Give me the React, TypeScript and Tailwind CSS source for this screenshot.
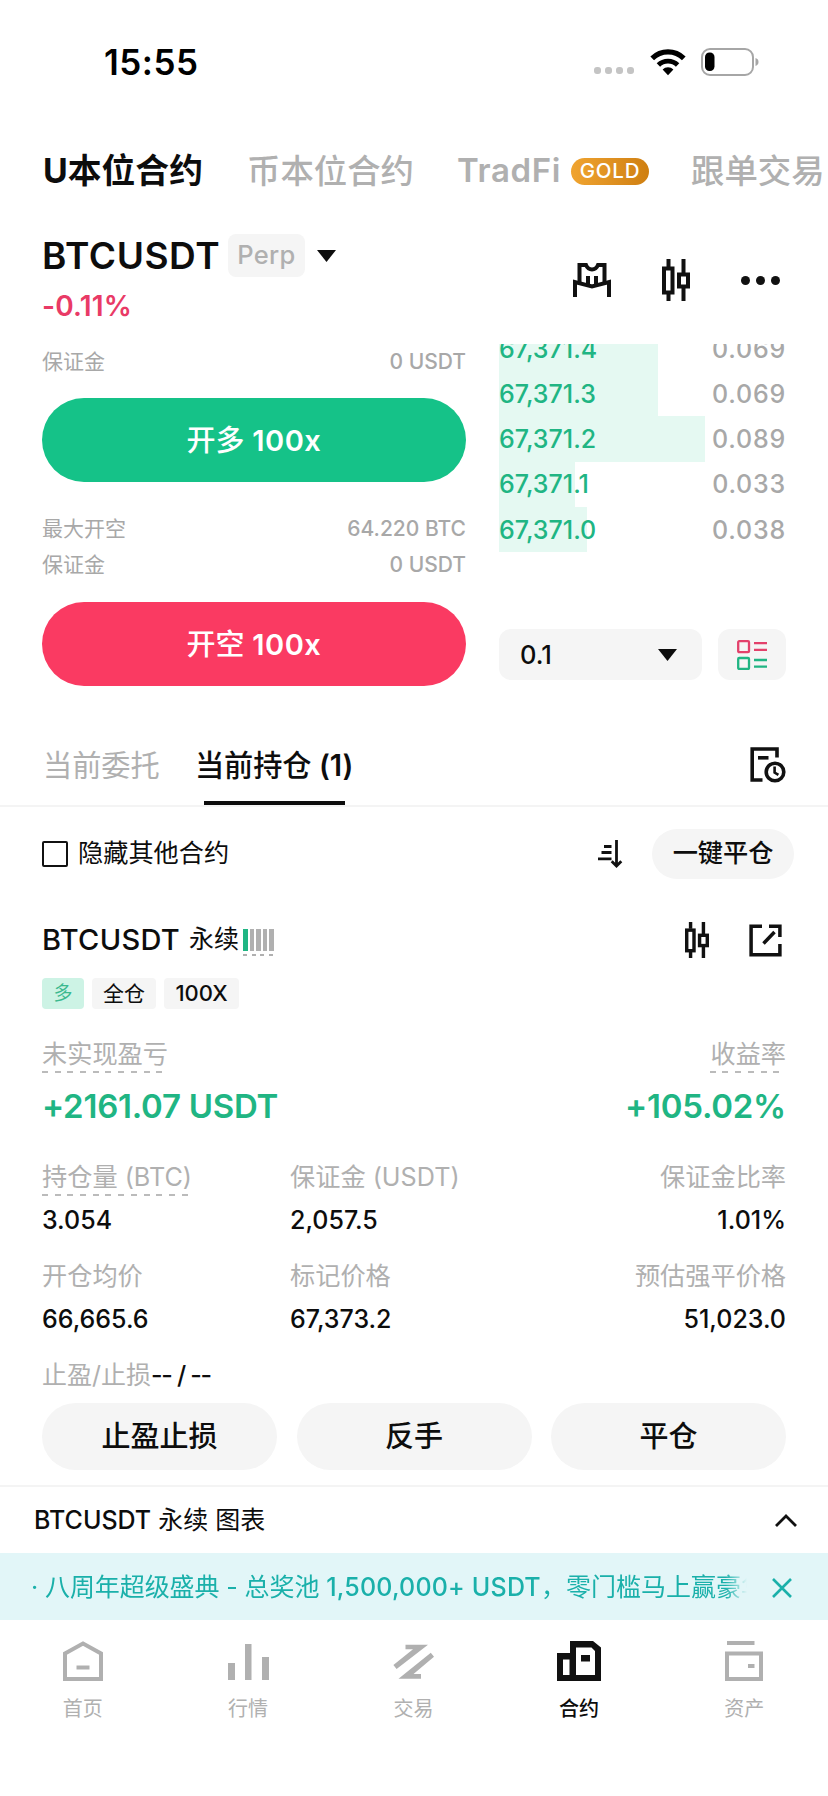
import type { ReactNode } from "react";

const tabs = ["U本位合约", "币本位合约", "TradFi", "跟单交易"];

const bids = [
  { price: "67,371.4", amount: "0.069", depth: 159 },
  { price: "67,371.3", amount: "0.069", depth: 159 },
  { price: "67,371.2", amount: "0.089", depth: 206 },
  { price: "67,371.1", amount: "0.033", depth: 76 },
  { price: "67,371.0", amount: "0.038", depth: 88 },
];

function WifiIcon() {
  return (
    <svg width="36" height="28" viewBox="0 0 36 28" fill="none">
      <path d="M2.200 10.400a22.500 22.500 0 0 1 31.600 0" stroke="#000" strokeWidth="5.200" />
      <path d="M8.400 17a13.600 13.600 0 0 1 19.200 0" stroke="#000" strokeWidth="4.800" />
      <path d="M18 27.200l-5.400-5.600a7.600 7.600 0 0 1 10.800 0z" fill="#000" />
    </svg>
  );
}

function BatteryIcon() {
  return (
    <svg width="58" height="28" viewBox="0 0 58 28" fill="none">
      <rect x="1" y="1" width="51" height="26" rx="8" stroke="#a6a6a6" strokeWidth="2" />
      <rect x="4" y="4.500" width="9.500" height="18.500" rx="4.500" fill="#000" />
      <path d="M54.500 10c2.300.8 3 2.200 3 4s-.7 3.200-3 4z" fill="#a6a6a6" />
    </svg>
  );
}

function ShirtIcon() {
  return (
    <svg width="38" height="34" viewBox="0 0 38 34" fill="none" stroke="#111" strokeWidth="4">
      <path d="M2 34V19l17 4.500L36 19v15" />
      <path d="M6.500 20V2H13c1.500 3.500 3.500 4.500 6 4.500S23.500 5.500 25 2h6.500v18" />
      <path d="M15 13v9M23 13v9" />
    </svg>
  );
}

function CandlesIcon({ width, height }: { width: number; height: number }) {
  return (
    <svg width={width} height={height} viewBox="0 0 28 42" fill="none" stroke="#111" strokeWidth="4">
      <path d="M6.500 0v8M6.500 35v7M21.500 0v14M21.500 29v13" />
      <rect x="2" y="9.500" width="8.500" height="24" />
      <rect x="17" y="15.500" width="9" height="12" />
    </svg>
  );
}

function DepthIcon() {
  return (
    <svg width="30" height="30" viewBox="0 0 30 30" fill="none" strokeWidth="2.300">
      <rect x="1.200" y="1.200" width="10.800" height="11" rx="1" stroke="#e3416b" />
      <path d="M17 3.200h13M17 9.800h13" stroke="#e3416b" />
      <rect x="1.200" y="18" width="10.800" height="11" rx="1" stroke="#20b583" />
      <path d="M17 20h13M17 26.600h13" stroke="#20b583" />
    </svg>
  );
}

function HistoryIcon() {
  return (
    <svg width="36" height="36" viewBox="0 0 36 36" fill="none" stroke="#111" strokeWidth="3.600">
      <path d="M27 10.500V2H2.200v31H12.500" />
      <path d="M8 10.800h10.500" />
      <circle cx="25" cy="25" r="8.800" />
      <path d="M24.600 19.500v6l3.800 2.300" strokeWidth="2.600" />
    </svg>
  );
}

function SortIcon() {
  return (
    <svg width="25" height="28" viewBox="0 0 25 28" fill="none" stroke="#111" strokeWidth="2.800">
      <path d="M6 6.500h7.500M3.500 12.500h10M0 18.800h13.500" />
      <path d="M18.500 0v25.500M13.700 21.200l4.800 4.800 4.800-4.800" />
    </svg>
  );
}

function ShareIcon() {
  return (
    <svg width="33" height="33" viewBox="0 0 33 33" fill="none" stroke="#111" strokeWidth="3.500">
      <path d="M13 2.200H2.100v28.500h28.800V20" />
      <path d="M20 2.200h10.900V13M14.500 19.500L25.500 8" />
    </svg>
  );
}

function HomeIcon() {
  return (
    <svg width="40" height="40" viewBox="0 0 40 40" fill="none" stroke="#b0b0b0" strokeWidth="4">
      <path d="M2 12.500L20 2.500l18 10V38H2z" />
      <path d="M13.500 26.500h13" />
    </svg>
  );
}

function MarketIcon() {
  return (
    <svg width="41" height="40" viewBox="0 0 41 40" fill="#b0b0b0">
      <path d="M0 22h7v17H0zM17 3h6.500v36H17zM34 16h7v23h-7z" />
    </svg>
  );
}

function TradeIcon() {
  return (
    <svg width="41" height="40" viewBox="0 0 41 40" fill="#b0b0b0">
      <path d="M12.500 3.700H35L3.600 28 .4 24 20 8.300h-7.500z" />
      <path d="M28 37.700H5.500l32.300-26 3.200 4-20.500 17.400H28z" />
    </svg>
  );
}

function ContractIcon() {
  return (
    <svg width="44" height="40" viewBox="0 0 44 40">
      <path
        d="M0 12h13V0h23l8 6.500V40H0zM6 18.500V34h6.500V18.500zM19 6.500V34h19V10l-3.500-3.500z"
        fill="#111"
        fillRule="evenodd"
      />
      <path d="M24 14h9v6.500h-9z" fill="#111" />
    </svg>
  );
}

function AssetsIcon() {
  return (
    <svg width="38" height="40" viewBox="0 0 38 40" fill="none" stroke="#b0b0b0" strokeWidth="4">
      <path d="M2 2h27.500" />
      <path d="M2 12.500h34V38H2z" />
      <path d="M23 25h6.500" />
    </svg>
  );
}

const navItems = [
  { label: "首页", icon: <HomeIcon /> },
  { label: "行情", icon: <MarketIcon /> },
  { label: "交易", icon: <TradeIcon /> },
  { label: "合约", icon: <ContractIcon />, active: true },
  { label: "资产", icon: <AssetsIcon /> },
];

function Triangle() {
  return (
    <svg width="19" height="12" viewBox="0 0 19 12">
      <path d="M0 0h19L9.500 12z" fill="#0d0d0d" />
    </svg>
  );
}

function StatusBar() {
  return (
    <div className="flex h-[124px] justify-between pt-[44px] pr-[69px] pl-[104px]">
      <span className="text-[35px] leading-[37px] font-semibold tracking-[0.500px] text-black">15:55</span>
      <div className="flex h-[36px] items-center">
        <div className="mt-[17px] flex gap-[4px]">
          {[0, 1, 2, 3].map((i) => (
            <span key={i} className="size-[7px] rounded-[3px] bg-[#c4c4c4]" />
          ))}
        </div>
        <div className="ml-[16px]">
          <WifiIcon />
        </div>
        <div className="ml-[15px]">
          <BatteryIcon />
        </div>
      </div>
    </div>
  );
}

function TopTabs() {
  return (
    <div className="flex h-[94px] items-center overflow-hidden pl-[43px] text-[33.400px] font-medium whitespace-nowrap text-[#b0b0b0]">
      <span className="w-[204px] text-[33.800px] font-bold text-[#0d0d0d]">{tabs[0]}</span>
      <span className="w-[210px]">{tabs[1]}</span>
      <span className="w-[114px] text-[33px] font-semibold tracking-[0.600px]">{tabs[2]}</span>
      <span className="flex h-[27px] w-[78px] items-center justify-center rounded-full bg-linear-to-r from-[#f0a430] to-[#cf7f10] text-[20.500px] tracking-[0.800px] text-white">
        GOLD
      </span>
      <span className="ml-[42px]">{tabs[3]}</span>
    </div>
  );
}

function PairHeader() {
  return (
    <div className="flex h-[126px] justify-between pr-[48px] pl-[42px]">
      <div>
        <div className="flex items-center pt-[16px]">
          <span className="w-[186px] text-[37px] leading-[43px] font-semibold tracking-[0.600px]">BTCUSDT</span>
          <span className="flex h-[43px] w-[77px] items-center justify-center rounded-[8px] bg-[#f5f5f5] text-[25.500px] font-medium tracking-[0.300px] text-[#b0b0b0]">
            Perp
          </span>
          <span className="ml-[12px]">
            <Triangle />
          </span>
        </div>
        <div className="mt-[12px] text-[28px] leading-[34px] font-semibold tracking-[0.200px] text-[#e93a66]">
          -0.11%
        </div>
      </div>
      <div className="flex h-[124px] items-center">
        <ShirtIcon />
        <div className="ml-[51px]">
          <CandlesIcon width={28} height={42} />
        </div>
        <div className="ml-[51px] flex gap-[6px]">
          {[0, 1, 2].map((i) => (
            <span key={i} className="size-[9px] rounded-full bg-[#111]" />
          ))}
        </div>
      </div>
    </div>
  );
}

function InfoRow({ label, value }: { label: string; value: string }) {
  return (
    <div className="flex h-[36px] items-center justify-between text-[21px] text-[#a8a8a8]">
      <span>{label}</span>
      <span className="font-medium">{value}</span>
    </div>
  );
}

function TradePanel() {
  return (
    <div className="flex h-[376px] justify-between pr-[42px] pl-[42px]">
      <div className="w-[424px]">
        <InfoRow label="保证金" value="0 USDT" />
        <button className="mt-[18px] block h-[84px] w-full rounded-full bg-[#15c288] pt-[1px] text-[29px] font-medium text-white">
          开多 <span className="font-semibold tracking-[0.500px]">100x</span>
        </button>
        <div className="mt-[29px]">
          <InfoRow label="最大开空" value="64.220 BTC" />
          <InfoRow label="保证金" value="0 USDT" />
        </div>
        <button className="mt-[19px] block h-[84px] w-full rounded-full bg-[#fa3a62] pt-[1px] text-[29px] font-medium text-white">
          开空 <span className="font-semibold tracking-[0.500px]">100x</span>
        </button>
      </div>
      <div className="w-[287px]">
        <div className="flex h-[208px] flex-col justify-end overflow-hidden">
          {bids.map((bid) => (
            <div
              key={bid.price}
              className="flex h-[45.200px] shrink-0 items-center justify-between bg-[linear-gradient(#e5f9f2,#e5f9f2)] bg-no-repeat pt-[2px] text-[25px] font-medium"
              style={{ backgroundSize: `${bid.depth}px 100%` }}
            >
              <span className="text-[#20b583]">{bid.price}</span>
              <span className="tracking-[0.800px] text-[#a8a8a8]">{bid.amount}</span>
            </div>
          ))}
        </div>
        <div className="mt-[77px] flex justify-between">
          <div className="flex h-[51px] w-[203px] items-center justify-between rounded-[12px] bg-[#f5f5f5] pt-[1px] pr-[25px] pl-[21px] text-[25.500px] font-medium">
            <span>0.1</span>
            <Triangle />
          </div>
          <div className="flex h-[51px] w-[68px] items-center justify-center rounded-[12px] bg-[#f5f5f5]">
            <DepthIcon />
          </div>
        </div>
      </div>
    </div>
  );
}

function PositionTabs() {
  return (
    <div className="flex h-[87px] items-stretch border-b-2 border-[#f4f4f4] pr-[42px] pl-[43px] text-[29.200px]">
      <span className="flex w-[152px] pt-[26px] leading-[40px] text-[#b0b0b0]">当前委托</span>
      <div className="flex flex-col items-center">
        <span className="pt-[26px] leading-[40px] font-medium tracking-[-0.100px]">
          当前持仓 <span className="font-semibold">(1)</span>
        </span>
        <span className="mt-auto h-[4px] w-[141px] bg-[#0d0d0d]" />
      </div>
      <div className="ml-auto pt-[27px]">
        <HistoryIcon />
      </div>
    </div>
  );
}

function FilterRow() {
  return (
    <div className="flex h-[94px] items-center pr-[34px] pl-[42px] text-[25.200px]">
      <span className="size-[26px] rounded-[2px] border-2 border-[#111]" />
      <span className="ml-[10px]">隐藏其他合约</span>
      <div className="mr-[29px] ml-auto">
        <SortIcon />
      </div>
      <button className="h-[50px] w-[142px] rounded-full bg-[#f5f5f5] font-medium">一键平仓</button>
    </div>
  );
}

function Label({ children, dashed }: { children: ReactNode; dashed?: boolean }) {
  return (
    <span
      className={`h-[36px] pt-[2px] text-[25.200px] leading-[30px] text-[#b0b0b0] ${
        dashed
          ? "bg-[repeating-linear-gradient(90deg,#bbb_0_6px,transparent_6px_12.700px)] bg-[length:100%_2px] bg-bottom bg-no-repeat"
          : ""
      }`}
    >
      {children}
    </span>
  );
}

function Stat({ label, value, dashed, right }: { label: string; value: string; dashed?: boolean; right?: boolean }) {
  return (
    <div className={right ? "flex flex-col items-end" : "flex flex-col items-start"}>
      <Label dashed={dashed}>{label}</Label>
      <span className="mt-[5px] text-[25px] leading-[38px] font-medium">{value}</span>
    </div>
  );
}

function PositionCard() {
  return (
    <div className="h-[584px] px-[42px] pt-[16px]">
      <div className="flex h-[46px] items-center">
        <span className="w-[147px] text-[29px] font-medium tracking-[0.300px]">BTCUSDT</span>
        <span className="text-[25px]">永续</span>
        <div className="mt-[4px] ml-[4px]">
          <div className="flex h-[22px] gap-[2px]">
            <span className="w-[4.500px] bg-[#20b583]" />
            {[0, 1, 2, 3].map((i) => (
              <span key={i} className="w-[4.500px] bg-[#b0b0b0]" />
            ))}
          </div>
          <div className="mt-[3px] h-[2px] bg-[repeating-linear-gradient(90deg,#b0b0b0_0_4px,transparent_4px_8.600px)]" />
        </div>
        <div className="ml-auto">
          <CandlesIcon width={24} height={36} />
        </div>
        <div className="mr-[4px] ml-[40px]">
          <ShareIcon />
        </div>
      </div>
      <div className="mt-[15px] flex h-[31px] gap-[8px] text-[21px] leading-[31px]">
        <span className="w-[42px] rounded-[4px] bg-[#cdf3e5] text-center text-[19px] text-[#3bb98f]">多</span>
        <span className="w-[64px] rounded-[4px] bg-[#f5f5f5] text-center">全仓</span>
        <span className="w-[75px] rounded-[4px] bg-[#f5f5f5] text-center text-[22px] font-medium">100X</span>
      </div>
      <div className="mt-[28px] flex justify-between">
        <Label dashed>未实现盈亏</Label>
        <Label dashed>收益率</Label>
      </div>
      <div className="mt-[14px] flex h-[40px] items-center justify-between text-[33px] font-semibold tracking-[-0.250px] text-[#20b583]">
        <span>+2161.07 USDT</span>
        <span>+105.02%</span>
      </div>
      <div className="mt-[33px] grid grid-cols-[248px_1fr_1fr] gap-y-[20px]">
        <Stat label="持仓量 (BTC)" value="3.054" dashed />
        <Stat label="保证金 (USDT)" value="2,057.5" />
        <Stat label="保证金比率" value="1.01%" right />
        <Stat label="开仓均价" value="66,665.6" />
        <Stat label="标记价格" value="67,373.2" />
        <Stat label="预估强平价格" value="51,023.0" right />
      </div>
      <div className="mt-[19px] h-[36px] text-[25px] leading-[36px]">
        <span className="text-[#b0b0b0]">止盈/止损</span>
        <span className="font-medium tracking-[-1.300px]">-- / --</span>
      </div>
      <div className="mt-[10px] flex justify-between text-[29px] font-medium">
        <button className="h-[67px] w-[235px] rounded-full bg-[#f5f5f5] pt-[1px]">止盈止损</button>
        <button className="h-[67px] w-[235px] rounded-full bg-[#f5f5f5] pt-[1px]">反手</button>
        <button className="h-[67px] w-[235px] rounded-full bg-[#f5f5f5] pt-[1px]">平仓</button>
      </div>
    </div>
  );
}

function ChartBar() {
  return (
    <div className="flex h-[68px] items-center justify-between border-t-2 border-[#f4f4f4] pt-[1px] pr-[31px] pl-[34px] text-[25px]">
      <span>
        <span className="font-medium">BTCUSDT</span> 永续 图表
      </span>
      <svg width="22" height="13" viewBox="0 0 22 13" fill="none" stroke="#111" strokeWidth="2.800">
        <path d="M1 12L11 2l10 10" />
      </svg>
    </div>
  );
}

function Banner() {
  return (
    <div className="flex h-[67px] items-center justify-between bg-[#e2f6f8] pt-[2px] pr-[36px] pl-[31px] text-[25px] text-[#1ab0aa]">
      <div className="w-[716px] overflow-hidden mask-r-from-97% whitespace-nowrap">
        <span className="tracking-[-0.100px]">· 八周年超级盛典 - 总奖池 </span>
        <span className="font-medium tracking-[0.200px]">1,500,000+ USDT</span>
        <span>，零门槛马上赢豪华</span>
      </div>
      <svg width="20" height="20" viewBox="0 0 20 20" fill="none" stroke="#1ab0aa" strokeWidth="2.600">
        <path d="M1 1l18 18M19 1L1 19" />
      </svg>
    </div>
  );
}

function BottomNav() {
  return (
    <div className="grid grid-cols-5 pt-[21px] pr-[1px]">
      {navItems.map((item) => (
        <div
          key={item.label}
          className={`flex flex-col items-center text-[20px] leading-[30px] ${
            item.active ? "font-medium text-[#0d0d0d]" : "text-[#b0b0b0]"
          }`}
        >
          {item.icon}
          <span className="mt-[13px]">{item.label}</span>
        </div>
      ))}
    </div>
  );
}

export default function App() {
  return (
    <div className="h-[1796px] w-[828px] overflow-hidden bg-white font-[Inter,'Noto_Sans_CJK_SC',sans-serif] text-[#0d0d0d]">
      <StatusBar />
      <TopTabs />
      <PairHeader />
      <TradePanel />
      <PositionTabs />
      <FilterRow />
      <PositionCard />
      <ChartBar />
      <Banner />
      <BottomNav />
    </div>
  );
}
